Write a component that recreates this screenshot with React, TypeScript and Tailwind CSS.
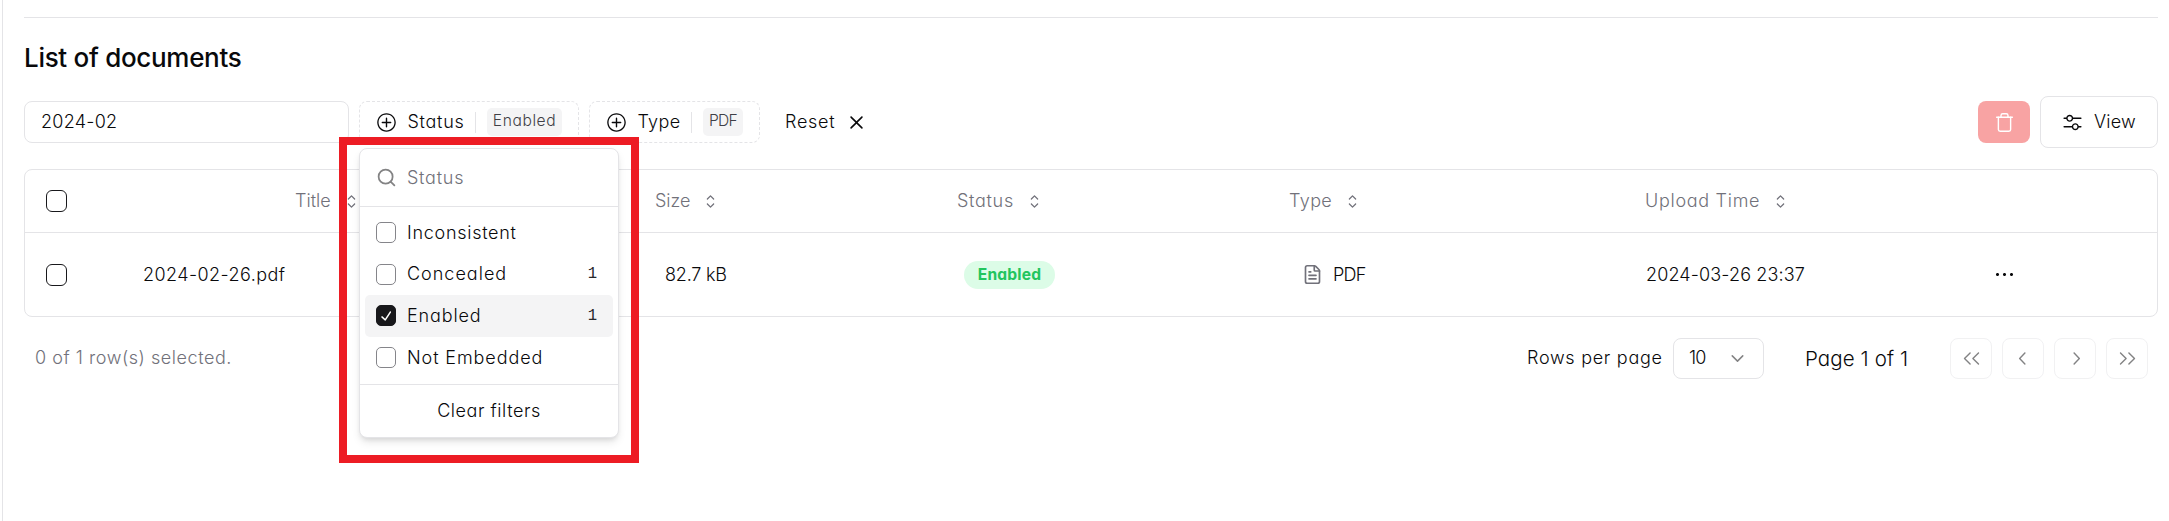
import type { ReactNode } from "react";
import { ChevronDown, FileText, Search, Trash } from "lucide-react";
import {
  RxCaretSort,
  RxCheck,
  RxChevronLeft,
  RxChevronRight,
  RxCross2,
  RxDotsHorizontal,
  RxDoubleArrowLeft,
  RxDoubleArrowRight,
  RxMixerHorizontal,
  RxPlusCircled,
} from "react-icons/rx";

function FilterButton({ label, value, className }: { label: ReactNode; value: ReactNode; className: string }) {
  return (
    <button className={`flex h-[42px] shrink-0 items-center rounded-lg border border-dashed border-[#e4e4e7] pl-4 ${className}`}>
      <RxPlusCircled className="mr-[10px] size-[21px] shrink-0" />
      {label}
      <span className="ml-[10px] mr-[11px] h-[21px] w-px bg-[#e4e4e7]" />
      {value}
    </button>
  );
}

function Header({ children, className }: { children: ReactNode; className: string }) {
  return (
    <div className={`flex shrink-0 items-center text-[#71717a] ${className}`}>
      {children}
      <RxCaretSort className="size-[21px] shrink-0" />
    </div>
  );
}

function Option({ label, count, checked }: { label: ReactNode; count?: number; checked?: boolean }) {
  return (
    <div className={`flex h-[41.6px] items-center rounded-[5px] px-[11px] ${checked ? "bg-[#f4f4f5]" : ""}`}>
      <span
        className={`mr-[11px] flex h-[21px] w-[20px] items-center justify-center rounded-[5px] border ${
          checked ? "border-[#18181b] bg-[#18181b] text-white" : "border-[#85858a]"
        }`}
      >
        {checked && <RxCheck className="size-[18px] shrink-0" />}
      </span>
      {label}
      {count !== undefined && (
        <span className="ml-auto mr-[5px] font-['Liberation_Mono',monospace] text-[15.6px] text-[#27272a]">{count}</span>
      )}
    </div>
  );
}

function PageButton({ children }: { children: ReactNode }) {
  return (
    <button className="flex h-[41px] w-[42px] items-center justify-center rounded-lg border border-[#e4e4e7] opacity-50">
      {children}
    </button>
  );
}

const rowBox = "ml-[21px] h-[22px] w-[21px] shrink-0 rounded-[6px] border border-[#18181b]";

export default function App() {
  return (
    <div className="relative h-[521px] w-[2169px] overflow-hidden bg-white font-['Inter',sans-serif] text-[18px] leading-[26px] font-[350] whitespace-nowrap text-[#09090b] [font-feature-settings:'cv11']">
      <div className="ml-[2px] flex h-full flex-col border-l border-[#e4e4e7] pr-[11px] pl-[21px]">
        <div className="mt-[17px] border-t border-[#e4e4e7]" />
        <h2 className="mt-[22px] h-[36px] text-[26px] leading-[36px] font-medium tracking-[-0.3px]">List of documents</h2>

        <div className="mt-5 flex h-[52px] items-center">
          <div className="flex h-[42px] w-[325px] shrink-0 items-center rounded-lg border border-[#e4e4e7] pl-4 tracking-[0.25px]">
            2024-02
          </div>
          <FilterButton
            className="ml-[10px] w-[220px]"
            label={<span className="w-[58px] tracking-[0.75px]">Status</span>}
            value={
              <span className="flex h-[28px] w-[75px] items-center justify-center rounded-[5px] bg-[#f4f4f5] pb-[3px] text-[15.6px] tracking-[0.6px] text-[#3f3f46]">
                Enabled
              </span>
            }
          />
          <FilterButton
            className="ml-[10px] w-[171px]"
            label={<span className="w-[44px] tracking-[0.4px]">Type</span>}
            value={
              <span className="flex h-[28px] w-[40px] items-center justify-center rounded-[5px] bg-[#f4f4f5] pb-[3px] text-[15.6px] tracking-[-0.7px] text-[#3f3f46]">
                PDF
              </span>
            }
          />
          <button className="ml-[25px] flex items-center">
            <span className="w-[61px] text-left tracking-[0.7px]">Reset</span>
            <RxCross2 className="size-[21px]" />
          </button>
          <button className="ml-auto flex h-[42px] w-[52px] items-center justify-center rounded-lg bg-[#f8a3a3] text-white">
            <Trash className="size-[21px]" strokeWidth={1.6} />
          </button>
          <button className="ml-[10px] flex h-[52px] w-[118px] items-center rounded-lg border border-[#e4e4e7] pl-[21px]">
            <RxMixerHorizontal className="mr-[11px] size-[21px]" />
            <span className="tracking-[0.2px]">View</span>
          </button>
        </div>

        <div className="mt-[21px] rounded-lg border border-[#e4e4e7]">
          <div className="flex h-[63px] items-center border-b border-[#e4e4e7]">
            <div className={rowBox} />
            <Header className="ml-[228px] w-[360px]">
              <span className="w-[46px]">Title</span>
            </Header>
            <Header className="w-[302px]">
              <span className="w-[45px]">Size</span>
            </Header>
            <Header className="w-[332px]">
              <span className="w-[67px] tracking-[0.7px]">Status</span>
            </Header>
            <Header className="w-[356px]">
              <span className="w-[53px] tracking-[0.4px]">Type</span>
            </Header>
            <Header className="">
              <span className="w-[125px] tracking-[0.7px]">Upload Time</span>
            </Header>
          </div>
          <div className="flex h-[83px] items-center">
            <div className={rowBox} />
            <div className="ml-[76px] w-[522px] shrink-0 tracking-[0.43px]">2024-02-26.pdf</div>
            <div className="w-[299px] shrink-0 tracking-[-0.2px]">82.7 kB</div>
            <div className="w-[338px] shrink-0">
              <span className="flex h-[28px] w-[91px] items-center justify-center rounded-full bg-[#dcfce7] text-[15.6px] font-bold tracking-[0.2px] text-[#22c55e]">
                Enabled
              </span>
            </div>
            <div className="flex w-[344px] shrink-0 items-center">
              <FileText className="mr-[10px] size-[21px] text-[#71717a]" strokeWidth={1.9} />
              <span className="tracking-[-0.7px]">PDF</span>
            </div>
            <div className="w-[348px] shrink-0 tracking-[0.13px]">2024-03-26 23:37</div>
            <RxDotsHorizontal className="size-[21px]" />
          </div>
        </div>

        <div className="mt-[21px] flex h-[41px] items-center">
          <div className="ml-[11px] pb-px tracking-[0.55px] text-[#71717a]">0 of 1 row(s) selected.</div>
          <div className="ml-auto w-[146px] pb-px tracking-[0.72px]">Rows per page</div>
          <div className="flex h-[41px] w-[91px] items-center justify-between rounded-lg border border-[#e4e4e7] px-[15px]">
            <span className="pb-px tracking-[-0.8px]">10</span>
            <ChevronDown className="size-[21px] opacity-50" strokeWidth={1.7} />
          </div>
          <div className="ml-[41px] w-[145px] pt-px text-[20.5px] tracking-[0.1px]">Page 1 of 1</div>
          <div className="mr-[10px] flex gap-[10px]">
            <PageButton><RxDoubleArrowLeft className="size-[21px]" /></PageButton>
            <PageButton><RxChevronLeft className="size-[21px]" /></PageButton>
            <PageButton><RxChevronRight className="size-[21px]" /></PageButton>
            <PageButton><RxDoubleArrowRight className="size-[21px]" /></PageButton>
          </div>
        </div>
      </div>

      <div className="absolute top-[148px] left-[359px] h-[290px] w-[260px] rounded-lg border border-[#e4e4e7] bg-white shadow-[0_5px_8px_-1px_rgba(0,0,0,0.1),0_3px_5px_-2px_rgba(0,0,0,0.1)]">
        <div className="flex h-[58px] items-center border-b border-[#e4e4e7] pl-4">
          <Search className="mr-[10px] size-[21px] opacity-50" strokeWidth={2} />
          <span className="tracking-[0.75px] text-[#71717a]">Status</span>
        </div>
        <div className="h-[178px] border-b border-[#e4e4e7] p-[5px]">
          <Option label={<span className="tracking-[0.72px]">Inconsistent</span>} />
          <Option label={<span className="tracking-[1px]">Concealed</span>} count={1} />
          <Option label={<span className="tracking-[0.85px]">Enabled</span>} count={1} checked />
          <Option label={<span className="tracking-[0.9px]">Not Embedded</span>} />
        </div>
        <div className="flex h-[52px] items-center justify-center tracking-[0.55px]">Clear filters</div>
      </div>
      <div className="absolute top-[137px] left-[339px] h-[326px] w-[300px] border-8 border-[#ed1c24]" />
    </div>
  );
}
